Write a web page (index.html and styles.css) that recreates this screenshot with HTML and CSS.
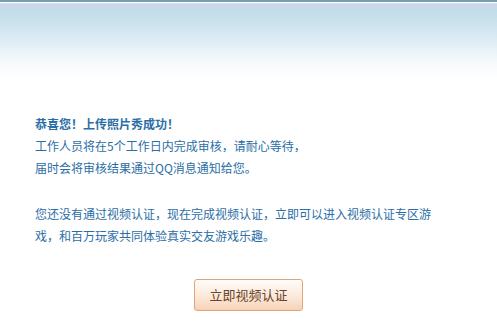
FILE: index.html
```html
<!DOCTYPE html>
<html lang="zh-CN">
<head>
    <meta charset="UTF-8">
    <title>上传照片秀成功</title>
    <link rel="stylesheet" href="styles.css">
</head>
<body>
    <div class="topbar"></div>
    <div class="shade"></div>
    <div class="content">
        <p class="msg">
            <b>恭喜您！上传照片秀成功！</b><br>
            工作人员将在5个工作日内完成审核，请耐心等待，<br>
            届时会将审核结果通过QQ消息通知给您。
        </p>
        <p class="msg">您还没有通过视频认证，现在完成视频认证，立即可以进入视频认证专区游戏，和百万玩家共同体验真实交友游戏乐趣。</p>
    </div>
    <div class="action">
        <a class="btn" href="#">立即视频认证</a>
    </div>
</body>
</html>
```

FILE: styles.css
```css
* {margin: 0;padding: 0;}

body {
    background: #fff;
    font-family: "Noto Sans CJK SC", "Liberation Sans", sans-serif;
    font-size: 12px;
}

.topbar {
    height: 2px;
    background-color: #7a9db3;
    border-bottom: 1px solid #fff;
}
.shade {
    height: 75px;
    border-top: 1px solid #d6e2ea;
    background: linear-gradient(#c6d9ec 0%, #c4dfe9 15%, #dbeaf3 45%, #f4f9fb 75%, #fff 100%);
}

.content {
    padding: 34px 0 0 35px;
    width: 400px;
}
.msg {
    color: #2b6ea6;
    line-height: 22px;
    margin-bottom: 24px;
}
.msg b {
    font-weight: bold;
}

.action {
    padding-top: 8px;
    text-align: center;
}
.btn {
    display: inline-block;
    width: 107px;
    height: 30px;
    line-height: 30px;
    border: 1px solid #e2a57a;
    border-radius: 3px;
    background: linear-gradient(#fffdfb, #fbe6d6 60%, #f6d2b8);
    color: #6a4426;
    font-size: 13px;
    text-decoration: none;
    text-align: center;
}
```
